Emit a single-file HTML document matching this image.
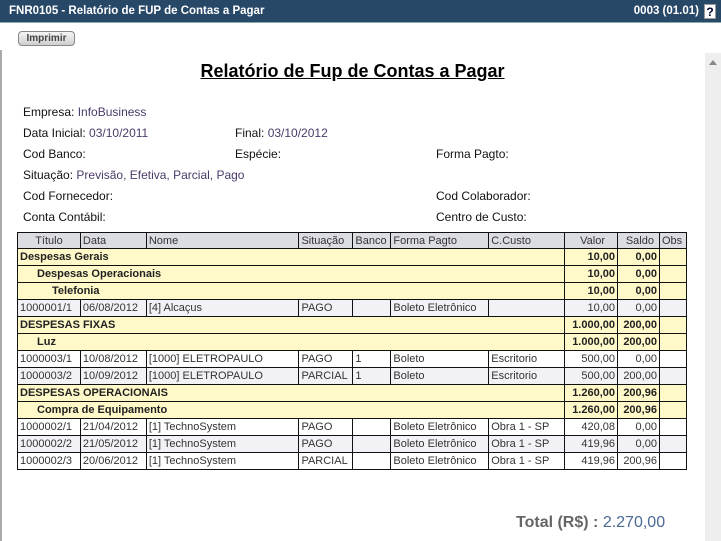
<!DOCTYPE html>
<html><head><meta charset="utf-8"><style>
*{margin:0;padding:0;box-sizing:border-box}
body{width:721px;height:541px;overflow:hidden;background:#fff;font-family:"Liberation Sans",Arial,sans-serif;position:relative}
.bar{position:absolute;left:0;top:0;width:721px;height:23px;background:#284868;border-bottom:1px solid #8aa;color:#fff;font-size:11.5px;font-weight:bold;line-height:23px;padding-left:9px}
.bar .r{position:absolute;right:22px;top:0}
.q{position:absolute;right:5px;top:4px;width:12px;height:15px;background:#fff;color:#003;font-size:12px;line-height:15px;text-align:center;border:1px solid #999}
.btn{position:absolute;left:18px;top:31px;width:57px;height:15px;border:1px solid #888;border-radius:4px;background:linear-gradient(#f4f4f4,#cfcfcf);font-size:10px;font-weight:bold;color:#444;text-align:center;line-height:13px}
.lb{position:absolute;left:0;top:50px;width:2px;height:491px;background:#aaa}
.sb{position:absolute;left:705px;top:53px;width:16px;height:488px;background:#eee}
.sb:before{content:"";position:absolute;left:4px;top:7px;border:4px solid transparent;border-bottom:5px solid #888;border-top:0}
h1{position:absolute;left:0;width:705px;top:61px;text-align:center;font-size:18px;font-weight:bold;text-decoration:underline;color:#000}
.f{position:absolute;font-size:12px;color:#222}
.f b{font-weight:normal;color:#111}
.f span{color:#4a3a6a}
table{position:absolute;left:17px;top:232px;width:670px;border-collapse:collapse;font-size:11px;color:#333}
td,th{border:1px solid #111;height:17px;padding:0 2px;white-space:nowrap;font-weight:normal}
th{background:#dcdce3;height:16px;text-align:left;color:#333}
tr.g td{background:#fff8c8;font-weight:bold;color:#222}
tr.d td{background:#fff}
tr.d2 td{background:#f2f2f6}
.n{text-align:right}
.tot{position:absolute;left:516px;top:514px;font-size:16px;color:#666}
.tot b{color:#666}
.tot span{color:#4a6a94}
</style></head><body>
<div class="bar">FNR0105 - Relatório de FUP de Contas a Pagar<span class="r">0003 (01.01)</span><div class="q">?</div></div>
<div class="btn">Imprimir</div>
<div class="lb"></div><div class="sb"></div>
<h1>Relatório de Fup de Contas a Pagar</h1>
<div class="f" style="left:23px;top:105px"><b>Empresa:</b> <span>InfoBusiness</span></div>
<div class="f" style="left:23px;top:126px"><b>Data Inicial:</b> <span>03/10/2011</span></div>
<div class="f" style="left:235px;top:126px"><b>Final:</b> <span>03/10/2012</span></div>
<div class="f" style="left:23px;top:147px"><b>Cod Banco:</b></div>
<div class="f" style="left:235px;top:147px"><b>Espécie:</b></div>
<div class="f" style="left:436px;top:147px"><b>Forma Pagto:</b></div>
<div class="f" style="left:23px;top:168px"><b>Situação:</b> <span>Previsão, Efetiva, Parcial, Pago</span></div>
<div class="f" style="left:23px;top:189px"><b>Cod Fornecedor:</b></div>
<div class="f" style="left:436px;top:189px"><b>Cod Colaborador:</b></div>
<div class="f" style="left:23px;top:210px"><b>Conta Contábil:</b></div>
<div class="f" style="left:436px;top:210px"><b>Centro de Custo:</b></div>
<table>
<colgroup><col style="width:63px"><col style="width:66px"><col style="width:153px"><col style="width:54px"><col style="width:38px"><col style="width:98px"><col style="width:76px"><col style="width:53px"><col style="width:42px"><col style="width:27px"></colgroup>
<tr><th style="text-align:center">Título</th><th>Data</th><th>Nome</th><th>Situação</th><th>Banco</th><th>Forma Pagto</th><th>C.Custo</th><th class="n" style="padding-right:12px">Valor</th><th class="n" style="padding-right:5px">Saldo</th><th>Obs</th></tr>
<tr class="g"><td colspan="7">Despesas Gerais</td><td class="n">10,00</td><td class="n">0,00</td><td></td></tr>
<tr class="g"><td colspan="7" style="padding-left:19px">Despesas Operacionais</td><td class="n">10,00</td><td class="n">0,00</td><td></td></tr>
<tr class="g"><td colspan="7" style="padding-left:34px">Telefonia</td><td class="n">10,00</td><td class="n">0,00</td><td></td></tr>
<tr class="d2"><td>1000001/1</td><td>06/08/2012</td><td>[4] Alcaçus</td><td>PAGO</td><td></td><td>Boleto Eletrônico</td><td></td><td class="n">10,00</td><td class="n">0,00</td><td></td></tr>
<tr class="g"><td colspan="7">DESPESAS FIXAS</td><td class="n">1.000,00</td><td class="n">200,00</td><td></td></tr>
<tr class="g"><td colspan="7" style="padding-left:19px">Luz</td><td class="n">1.000,00</td><td class="n">200,00</td><td></td></tr>
<tr class="d"><td>1000003/1</td><td>10/08/2012</td><td>[1000] ELETROPAULO</td><td>PAGO</td><td>1</td><td>Boleto</td><td>Escritorio</td><td class="n">500,00</td><td class="n">0,00</td><td></td></tr>
<tr class="d2"><td>1000003/2</td><td>10/09/2012</td><td>[1000] ELETROPAULO</td><td>PARCIAL</td><td>1</td><td>Boleto</td><td>Escritorio</td><td class="n">500,00</td><td class="n">200,00</td><td></td></tr>
<tr class="g"><td colspan="7">DESPESAS OPERACIONAIS</td><td class="n">1.260,00</td><td class="n">200,96</td><td></td></tr>
<tr class="g"><td colspan="7" style="padding-left:19px">Compra de Equipamento</td><td class="n">1.260,00</td><td class="n">200,96</td><td></td></tr>
<tr class="d"><td>1000002/1</td><td>21/04/2012</td><td>[1] TechnoSystem</td><td>PAGO</td><td></td><td>Boleto Eletrônico</td><td>Obra 1 - SP</td><td class="n">420,08</td><td class="n">0,00</td><td></td></tr>
<tr class="d2"><td>1000002/2</td><td>21/05/2012</td><td>[1] TechnoSystem</td><td>PAGO</td><td></td><td>Boleto Eletrônico</td><td>Obra 1 - SP</td><td class="n">419,96</td><td class="n">0,00</td><td></td></tr>
<tr class="d"><td>1000002/3</td><td>20/06/2012</td><td>[1] TechnoSystem</td><td>PARCIAL</td><td></td><td>Boleto Eletrônico</td><td>Obra 1 - SP</td><td class="n">419,96</td><td class="n">200,96</td><td></td></tr>
</table>
<div class="tot"><b>Total (R$) :</b> <span>2.270,00</span></div>
</body></html>
